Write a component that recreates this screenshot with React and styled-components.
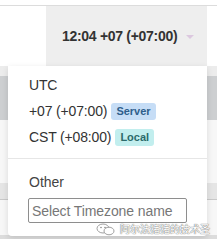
import React from "react";
import styled, { createGlobalStyle } from "styled-components";

const Global = createGlobalStyle`
  html, body { margin: 0; padding: 0; background: #fff; }
  body { font-family: "Liberation Sans", Arial, sans-serif; color: #333; }
  * { box-sizing: border-box; }
`;

const Page = styled.div`
  width: 217px;
  height: 239px;
  overflow: hidden;
  position: relative;
  padding-top: 5px;
`;

const TopBar = styled.div`
  border-top: 1px solid #dcdcdc;
  display: flex;
  justify-content: flex-end;
  padding-right: 10px;
`;

const TimeButton = styled.div`
  width: 161px;
  height: 60px;
  background: #eeeeee;
  display: flex;
  align-items: center;
  padding-left: 16px;
  gap: 9px;
  font-size: 14px;
  letter-spacing: -0.3px;
  font-weight: bold;
  color: #333;
`;

const Caret = styled.span`
  width: 0;
  height: 0;
  border-left: 4px solid transparent;
  border-right: 4px solid transparent;
  border-top: 4px solid #dcc8df;
  margin-top: 1px;
`;

const Backdrop = styled.div`
  display: flex;
  flex-direction: column;
`;

const Band = styled.div`
  height: ${(p) => p.$h}px;
  background: ${(p) => p.$bg};
  border-bottom: ${(p) => (p.$line ? `1px solid ${p.$line}` : "none")};
`;

const Menu = styled.div`
  position: absolute;
  left: 8px;
  top: 66px;
  width: 199px;
  height: 170px;
  background: #fff;
  border-radius: 0 0 4px 4px;
  box-shadow: 0 2px 6px rgba(0, 0, 0, 0.12);
  padding-top: 6px;
  display: flex;
  flex-direction: column;
`;

const Option = styled.div`
  height: 26px;
  display: flex;
  align-items: center;
  gap: 4px;
  padding-left: 21px;
  font-size: 14px;
  letter-spacing: -0.15px;
  color: #333;
`;

const Badge = styled.span`
  height: 17px;
  padding: 0 5px;
  border-radius: 3px;
  font-size: 11px;
  font-weight: bold;
  letter-spacing: 0;
  display: inline-flex;
  align-items: center;
  background: ${(p) => (p.$tone === "server" ? "#c6ddf6" : "#c2eeee")};
  color: ${(p) => (p.$tone === "server" ? "#2f5f8c" : "#2c6a6a")};
`;

const Divider = styled.div`
  height: 1px;
  background: #e6e6e6;
  margin-top: 8px;
`;

const Section = styled.div`
  padding: 14px 20px 0 20px;
  display: flex;
  flex-direction: column;
  gap: 7px;
`;

const Label = styled.div`
  font-size: 14px;
  color: #444;
  padding-left: 1px;
  line-height: 18px;
`;

const Input = styled.input`
  width: 159px;
  height: 25px;
  border: 1px solid #8e8e8e;
  border-radius: 2px;
  padding: 0 3px;
  font-family: "Liberation Sans", Arial, sans-serif;
  font-size: 14px;
  letter-spacing: -0.1px;
  color: #333;
  outline: none;
  &::placeholder { color: #777; }
`;

const Watermark = styled.div`
  position: absolute;
  left: 96px;
  top: 222px;
  display: flex;
  align-items: center;
  gap: 4px;
  font-family: "Noto Sans CJK SC", sans-serif;
  font-size: 10px;
  line-height: 14px;
  color: #fff;
  text-shadow: 0 0 1px #666, 0 0 1px #666;
`;

const WeChatIcon = () => (
  <svg width="20" height="13" viewBox="0 0 20 13">
    <ellipse cx="7" cy="5.5" rx="6" ry="4.5" fill="#fff" stroke="#888" strokeWidth="0.8" />
    <ellipse cx="13" cy="8" rx="5" ry="3.8" fill="#fff" stroke="#888" strokeWidth="0.8" />
    <circle cx="5" cy="4.5" r="0.8" fill="#888" />
    <circle cx="9" cy="4.5" r="0.8" fill="#888" />
  </svg>
);

export default function App() {
  return (
    <>
      <Global />
      <Page>
        <TopBar>
          <TimeButton>
            12:04 +07 (+07:00)
            <Caret />
          </TimeButton>
        </TopBar>
        <Backdrop>
          <Band $h={10} $bg="#ececec" />
          <Band $h={44} $bg="#cdcfd1" />
          <Band $h={63} $bg="#f7f7f7" />
          <Band $h={17} $bg="#e5e5e5" $line="#c9c9c9" />
          <Band $h={35} $bg="#f7f7f7" />
          <Band $h={5} $bg="#dcdcdc" />
        </Backdrop>
        <Menu>
          <Option>UTC</Option>
          <Option>
            +07 (+07:00)
            <Badge $tone="server">Server</Badge>
          </Option>
          <Option>
            CST (+08:00)
            <Badge $tone="local">Local</Badge>
          </Option>
          <Divider />
          <Section>
            <Label>Other</Label>
            <Input placeholder="Select Timezone name" />
          </Section>
        </Menu>
        <Watermark>
          <WeChatIcon />
          阿尔法猪猪的技术圣
        </Watermark>
      </Page>
    </>
  );
}
